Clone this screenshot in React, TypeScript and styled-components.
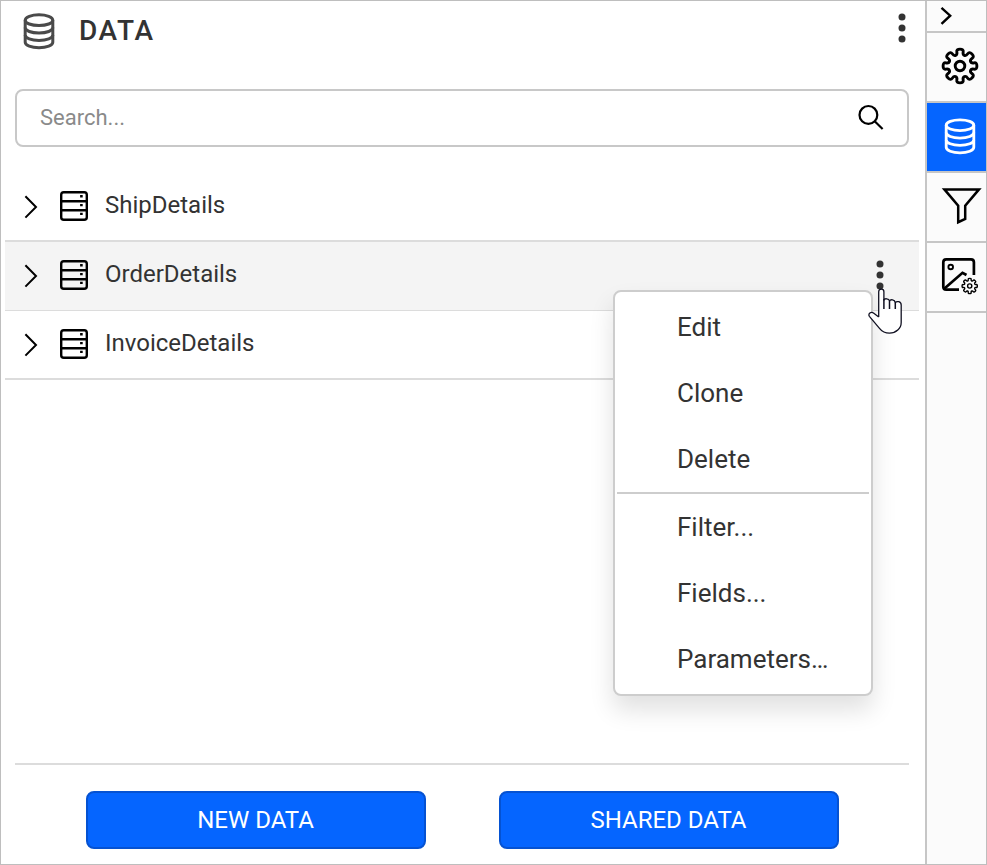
import React from "react";
import styled, { createGlobalStyle } from "styled-components";

const GlobalStyle = createGlobalStyle`
  * { box-sizing: border-box; }
  body { margin: 0; background: #fff; font-family: Roboto, sans-serif; color: #333; }
  button { font-family: inherit; }
  svg { display: block; flex: none; overflow: visible; }
`;

const Frame = styled.div`
  display: flex;
  width: 987px;
  height: 865px;
  border: 1px solid #bebebe;
  background: #fff;
`;

const Panel = styled.main`
  width: 924px;
  display: flex;
  flex-direction: column;
`;

const Header = styled.header`
  height: 88px;
  padding: 11px 19px 0 22px;
  display: flex;
  align-items: flex-start;
`;

const Title = styled.h1`
  margin: 2px auto 0 22px;
  font-size: 28px;
  line-height: 34px;
  font-weight: 500;
  letter-spacing: 1.6px;
`;

const SearchBox = styled.label`
  height: 58px;
  margin: 0 16px 0 14px;
  padding: 0 23px 0 23px;
  border: 2px solid #c8c8c8;
  border-radius: 8px;
  display: flex;
  align-items: center;
  justify-content: space-between;
`;

const SearchInput = styled.input`
  width: 600px;
  height: 40px;
  padding: 0 0 2px;
  border: 0;
  outline: 0;
  background: none;
  font: 400 22px/36px Roboto, sans-serif;
  color: #333;
  &::placeholder { color: #8a8a8a; opacity: 1; }
`;

const List = styled.ul`
  list-style: none;
  margin: 25px 6px 0 4px;
  padding: 0;
`;

const Row = styled.li<{ $height: number; $line: number; $lift: number; $active?: boolean }>`
  position: relative;
  height: ${(p) => p.$height}px;
  padding: 0 35px ${(p) => p.$lift}px 19px;
  display: flex;
  align-items: center;
  border-bottom: ${(p) => p.$line}px solid #dcdcdc;
  background: ${(p) => (p.$active ? "#f4f4f4" : "#fff")};
`;

const RowLabel = styled.span`
  margin: 0 auto 0 17px;
  padding-bottom: 3px;
  font-size: 24px;
  line-height: 30px;
`;

const Expander = styled.span`
  padding-top: 2px;
  margin-right: 22px;
`;

const DotsButton = styled.button<{ $drop?: number }>`
  margin-top: ${(p) => p.$drop ?? 0}px;
  padding: 0;
  border: 0;
  background: none;
`;

const Menu = styled.div`
  position: absolute;
  z-index: 2;
  top: 48px;
  right: 46px;
  width: 260px;
  padding: 2px;
  border: 2px solid #cdcdcd;
  border-radius: 8px;
  background: #fff;
  box-shadow: 0 14px 24px rgba(0, 0, 0, 0.12);
`;

const MenuItem = styled.div`
  height: 66px;
  padding-left: 60px;
  font-size: 26px;
  line-height: 66px;
`;

const MenuLine = styled.div`
  height: 2px;
  background: #cdcdcd;
`;

const Pointer = styled.span`
  position: absolute;
  z-index: 3;
  top: 46px;
  right: 17px;
`;

const Footer = styled.footer`
  margin: auto 16px 15px 14px;
  padding: 26px 70px 0 71px;
  display: flex;
  justify-content: space-between;
  border-top: 2px solid #dcdcdc;
`;

const ActionButton = styled.button`
  width: 340px;
  height: 58px;
  padding: 0 1px 0 0;
  border: 2px solid #0552d2;
  border-radius: 8px;
  background: #0565ff;
  color: #fff;
  font-size: 24px;
  line-height: 54px;
`;

const Sidebar = styled.nav`
  flex: 1;
  border-left: 2px solid #c6c6c6;
  background: #fbfbfb;
`;

const Tab = styled.div<{ $height?: number; $active?: boolean }>`
  height: ${(p) => p.$height ?? 70}px;
  display: flex;
  justify-content: flex-start;
  align-items: flex-start;
  border-bottom: 2px solid #c6c6c6;
  background: ${(p) => (p.$active ? "#0565ff" : "transparent")};
`;

// Builds a closed, rounded gear outline centred on the origin.
const gearPath = (outer: number, inner: number) => {
  const pts: [number, number][] = [];
  for (let i = 0; i < 8; i++) {
    for (const [r, d] of [[inner, -13], [outer, -12.5], [outer, 12.5], [inner, 13]]) {
      const a = ((i * 45 + d) * Math.PI) / 180;
      pts.push([r * Math.cos(a), r * Math.sin(a)]);
    }
  }
  const mid = (i: number) => {
    const a = pts[i % pts.length];
    const b = pts[(i + 1) % pts.length];
    return `${((a[0] + b[0]) / 2).toFixed(2)} ${((a[1] + b[1]) / 2).toFixed(2)}`;
  };
  return (
    `M${mid(pts.length - 1)}` +
    pts.map((p, i) => `Q${p[0].toFixed(2)} ${p[1].toFixed(2)} ${mid(i)}`).join("") +
    "Z"
  );
};

const DatabaseIcon = ({ color, weight }: { color: string; weight: number }) => (
  <svg width="34" height="38" viewBox="0 0 34 38" fill="none" stroke={color} strokeWidth={weight}>
    <ellipse cx="16" cy="8.2" rx="13.8" ry="5.4" />
    <path d="M2.2 8.2V30.3C2.2 33.4 8.3 35.8 16 35.8S29.8 33.4 29.8 30.3V8.2" />
    <path d="M2.2 15.6C2.2 18.7 8.3 21.1 16 21.1S29.8 18.7 29.8 15.6M2.2 22.9C2.2 26 8.3 28.4 16 28.4S29.8 26 29.8 22.9" />
  </svg>
);

const Dots = () => (
  <svg width="8" height="30" viewBox="0 0 8 30" fill="#333">
    <circle cx="4" cy="4" r="3.5" />
    <circle cx="4" cy="15" r="3.5" />
    <circle cx="4" cy="26" r="3.5" />
  </svg>
);

const Chevron = () => (
  <svg width="14" height="24" viewBox="0 0 14 24" fill="none" stroke="#000" strokeWidth="2">
    <path d="M1.4 1.2L12 12L1.4 22.6" />
  </svg>
);

const ServerIcon = () => (
  <svg width="28" height="30" viewBox="0 0 28 30" fill="none" stroke="#000" strokeWidth="2.4">
    <rect x="1.2" y="1.2" width="25.6" height="27.6" rx="2.6" />
    <path d="M1 10.2H27M1 19.3H27" />
    <path d="M20.1 5.2H22.7M20.1 14.1H22.7M20.1 22.9H22.7" />
  </svg>
);

const SearchIcon = () => (
  <svg width="26" height="26" viewBox="0 0 26 26" fill="none" stroke="#000" strokeWidth="2.2">
    <circle cx="10.4" cy="9.9" r="8.9" />
    <path d="M16.7 16.3L24.6 24" />
  </svg>
);

const HandIcon = () => (
  <svg width="34" height="47" viewBox="0 0 34 47" fill="#fff" stroke="#111122" strokeWidth="1.3" strokeLinejoin="round">
    <path d="M10.7 29V3.8C10.7.3 15.9.3 15.9 3.8V12C16.3 10.2 21 10.2 21.5 13C22.5 11 26.7 11.5 27.3 14.6C28.7 12.8 33.2 13.3 33.2 17V34.5C33.2 40.5 28 45.2 21.5 45.2C17 45.2 14 43.5 11.5 40.3L1.4 28.3C-.4 26 3 23.1 5.8 25.2L10.7 29" />
    <path d="M15.9 11V21M21.5 13V21M27.3 14.6V21" strokeWidth="1.5" fill="none" />
  </svg>
);

const DataRow = ({ name, height, line, lift = 0, active, children }: {
  name: string; height: number; line: number; lift?: number; active?: boolean; children?: React.ReactNode;
}) => (
  <Row $height={height} $line={line} $lift={lift} $active={active}>
    <Expander><Chevron /></Expander>
    <ServerIcon />
    <RowLabel>{name}</RowLabel>
    {children}
  </Row>
);

export default function App() {
  return (
    <>
      <GlobalStyle />
      <Frame>
        <Panel>
          <Header>
            <DatabaseIcon color="#4a4a4a" weight={3} />
            <Title>DATA</Title>
            <DotsButton $drop={1} aria-label="More"><Dots /></DotsButton>
          </Header>
          <SearchBox>
            <SearchInput placeholder="Search..." />
            <SearchIcon />
          </SearchBox>
          <List>
            <DataRow name="ShipDetails" height={70} line={2} />
            <DataRow name="OrderDetails" height={69} line={1} lift={2} active>
              <DotsButton aria-label="Options"><Dots /></DotsButton>
              <Menu>
                <MenuItem>Edit</MenuItem>
                <MenuItem>Clone</MenuItem>
                <MenuItem>Delete</MenuItem>
                <MenuLine />
                <MenuItem>Filter...</MenuItem>
                <MenuItem>Fields...</MenuItem>
                <MenuItem>Parameters…</MenuItem>
              </Menu>
              <Pointer><HandIcon /></Pointer>
            </DataRow>
            <DataRow name="InvoiceDetails" height={69} line={2} lift={1} />
          </List>
          <Footer>
            <ActionButton>NEW DATA</ActionButton>
            <ActionButton>SHARED DATA</ActionButton>
          </Footer>
        </Panel>
        <Sidebar>
          <Tab $height={32}>
            <svg width="59" height="30" fill="none" stroke="#000" strokeWidth="2.4">
              <path d="M14.5 6.8L23.2 14.7L14.5 22.8" />
            </svg>
          </Tab>
          <Tab>
            <svg width="59" height="68" fill="none" stroke="#000" strokeWidth="2.9">
              <g transform="translate(33 33)">
                <path d={gearPath(17.3, 11.6)} />
                <circle r="4.8" />
              </g>
            </svg>
          </Tab>
          <Tab $active>
            <svg width="59" height="68">
              <g transform="translate(17 14)"><DatabaseIcon color="#fff" weight={2.8} /></g>
            </svg>
          </Tab>
          <Tab>
            <svg width="59" height="68" fill="none" stroke="#000" strokeWidth="2.5">
              <path d="M17.4 16.4H52L38.2 32.8V46L31.2 49.2V32.8Z" />
            </svg>
          </Tab>
          <Tab>
            <svg width="59" height="68" fill="none" stroke="#000" strokeWidth="2.7">
              <path d="M32 46.6H19.2Q16.3 46.6 16.3 43.7V19.2Q16.3 16.3 19.2 16.3H44Q46.9 16.3 46.9 19.2V32" />
              <path d="M17.5 45.5L35.5 29.8L39.5 32" />
              <circle cx="23.7" cy="24" r="2.3" strokeWidth="1.9" />
              <g transform="translate(42.7 43)" strokeWidth="1.4">
                <path d={gearPath(7.8, 5.5)} />
                <circle r="2.1" />
              </g>
            </svg>
          </Tab>
        </Sidebar>
      </Frame>
    </>
  );
}
